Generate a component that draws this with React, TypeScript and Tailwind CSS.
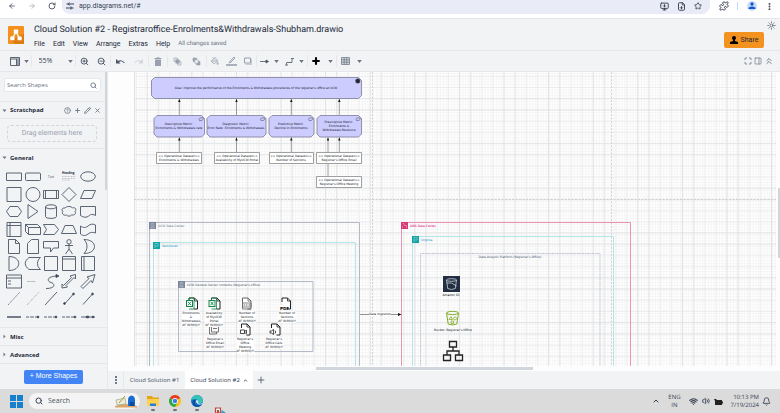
import React from "react";
import {
  ArrowLeft, ArrowRight, RotateCw, MonitorDown, FileDown, Star, Puzzle, ZoomIn, ZoomOut,
  PaintBucket, Plus, Maximize, PanelRight, ChevronsUp, Search, CircleHelp,
  Pencil, X, EllipsisVertical, ChevronUp, Wifi, Volume2, Bell, Sun,
} from "lucide-react";

const MENUS = ["File", "Edit", "View", "Arrange", "Extras", "Help"];

/* ---------- small shared pieces ---------- */

function Caret() {
  return (
    <svg viewBox="0 0 6 4" className="h-[3px] w-[5px] shrink-0 fill-gray-500">
      <path d="M0 0h6L3 4z" />
    </svg>
  );
}

function Tool({ label, children }: { label: string; children: React.ReactNode }) {
  return (
    <button type="button" aria-label={label} className="flex shrink-0 items-center justify-center">
      {children}
    </button>
  );
}

/* ---------- browser bar ---------- */

function BrowserBar() {
  return (
    <div className="flex h-[18px] shrink-0 items-start bg-white text-gray-600">
      <div className="flex h-3 w-[62px] items-center justify-around pl-[2px]">
        <Tool label="Back"><ArrowLeft size={8} strokeWidth={2.5} /></Tool>
        <Tool label="Forward"><ArrowRight size={8} className="text-gray-400" /></Tool>
        <Tool label="Reload"><RotateCw size={8} strokeWidth={2.8} /></Tool>
      </div>
      <div className="flex h-[14px] flex-1 items-center rounded-b-lg bg-[#e9ecf7] pb-[2px] pl-1">
        <Tool label="Site information">
          <svg viewBox="0 0 8 8" className="h-2 w-2 fill-none stroke-gray-700">
            <path d="M0.5 2H2M5 2h3M0 6h3M6 6h1.5" />
            <circle cx="3.3" cy="2" r="1" />
            <circle cx="4.8" cy="6" r="1" />
          </svg>
        </Tool>
        <input aria-label="Address" defaultValue="app.diagrams.net/#" className="ml-[5px] min-w-0 flex-1 bg-transparent font-[Roboto,sans-serif] text-[7px] leading-3 text-gray-700 outline-none" />
        <div className="flex items-center gap-2 pr-2 text-gray-700">
          <Tool label="Install app"><MonitorDown size={9} strokeWidth={2.5} /></Tool>
          <Tool label="Save page"><FileDown size={9} strokeWidth={2.5} /></Tool>
          <Tool label="Bookmark"><Star size={8} strokeWidth={2.5} /></Tool>
        </div>
      </div>
      <div className="flex h-3 w-[70px] items-center justify-between pl-[9px] pr-[6px] text-gray-700">
        <Tool label="Extensions"><Puzzle size={10} strokeWidth={2.4} /></Tool>
        <span className="h-2 w-px bg-blue-200" />
        <Tool label="Profile">
          <svg viewBox="0 0 10 10" className="h-[10px] w-[10px]">
            <circle cx="5" cy="5" r="5" fill="#c9dcfb" />
            <circle cx="5" cy="3" r="1.7" fill="#1358c8" />
            <path d="M1.5 8V6.8Q5 4.2 8.5 6.8V8z" fill="#1358c8" />
          </svg>
        </Tool>
        <Tool label="Browser menu"><EllipsisVertical size={9} strokeWidth={3} /></Tool>
      </div>
    </div>
  );
}

/* ---------- title, menus and toolbar ---------- */

function Header() {
  return (
    <header className="flex h-8 shrink-0 items-start border-t border-gray-200 pl-2 pr-1 font-[Roboto,sans-serif]">
      <svg viewBox="0 0 16 18" className="mt-[7px] h-[18px] w-4">
        <rect width="16" height="18" rx="1" fill="#f4911e" />
        <path d="M16 8v10H7l-4-4z" fill="#dd7c10" />
        <path d="M8 6L4.5 12M8 6l3.5 6" stroke="#fff" strokeWidth="1.3" />
        <path d="M5.8 3.5h4.4v4H5.8zM2.3 10.5h4.2v3.8H2.3zM9.5 10.5h4.2v3.8H9.5z" fill="#fff" />
      </svg>
      <div className="ml-[10px] flex-1 pt-[5px]">
        <h1 className="text-[9px] leading-3 text-gray-800">Cloud Solution #2 - Registraroffice-Enrolments&amp;Withdrawals-Shubham.drawio</h1>
        <nav className="mt-[3px] flex gap-2 text-[7px] leading-[10px] text-gray-800">
          {MENUS.map((m) => <button key={m} type="button">{m}</button>)}
          <span className="text-[6px] text-gray-500">All changes saved</span>
        </nav>
      </div>
      <div className="flex flex-col items-end pt-[2px]">
        <Tool label="Appearance"><Sun size={9} className="text-gray-600" /></Tool>
        <button type="button" className="mr-3 mt-[2px] flex h-4 w-10 items-center justify-center gap-[3px] rounded-[2px] bg-[#f4921f] text-[7px] text-gray-800">
          <svg viewBox="0 0 8 8" className="h-2 w-2 fill-black">
            <circle cx="4" cy="2" r="2" />
            <path d="M3 3h2v2l3 1v2H0V6l3-1z" />
          </svg>
          Share
        </button>
      </div>
    </header>
  );
}

function Stack({ front }: { front: boolean }) {
  return (
    <svg viewBox="0 0 9 9" className="h-[9px] w-[9px] fill-gray-300 stroke-gray-400">
      <path d="M1 1h3.5v3.5H1zM4.5 4.5H8V8H4.5z" strokeWidth="0.6" className={front ? "fill-gray-200" : "fill-gray-400"} />
      <path d="M2.8 2.8h3.4v3.4H2.8z" strokeWidth="0.6" className={front ? "fill-gray-400" : "fill-gray-100"} />
    </svg>
  );
}

function Toolbar() {
  const group = "flex h-3 shrink-0 items-center justify-around border-r border-gray-200";
  return (
    <div className="flex h-[22px] shrink-0 items-center border-b border-t border-gray-200 pl-2 pr-[6px] text-gray-500">
      <div className={`${group} w-6`}>
        <Tool label="View panels">
          <svg viewBox="0 0 10 9" className="h-[9px] w-[10px] fill-none stroke-gray-600">
            <path d="M.5.5h9v8h-9zM.5 2h9M6.500 2v6.500" strokeWidth="0.9" />
            <path d="M7 3h2v5H7z" className="fill-gray-400 stroke-none" />
          </svg>
        </Tool>
        <Caret />
      </div>
      <div className={`${group} w-11 pl-1`}>
        <select aria-label="Zoom level" defaultValue="55%" className="w-6 appearance-none bg-transparent text-[7px] text-gray-700 outline-none">
          <option>55%</option>
          <option>100%</option>
        </select>
        <Caret />
      </div>
      <div className={`${group} w-[35px] text-gray-600`}>
        <Tool label="Zoom in"><ZoomIn size={9} strokeWidth={2.5} /></Tool>
        <Tool label="Zoom out"><ZoomOut size={9} strokeWidth={2.5} /></Tool>
      </div>
      <div className={`${group} w-[38px]`}>
        <Tool label="Undo">
          <svg viewBox="0 0 9 7" className="h-[7px] w-[9px] fill-gray-600"><path d="M0 1v4.500h4.500L3 4q2.800-1.800 5 1.200l.8-.4Q6 .8 2 2.800z" /></svg>
        </Tool>
        <Tool label="Redo">
          <svg viewBox="0 0 9 7" className="h-[7px] w-[9px] fill-gray-300"><path d="M9 1v4.500H4.500L6 4Q3.200 2.200 1 5.200l-.8-.4Q3 .8 7 2.800z" /></svg>
        </Tool>
      </div>
      <div className={`${group} w-[19px]`}>
        <Tool label="Delete">
          <svg viewBox="0 0 8 9" className="h-[9px] w-2 fill-gray-400"><path d="M.5 1h2l.5-.8h2l.5.800h2v1h-7zM1 2.600h6V9H1z" /></svg>
        </Tool>
      </div>
      <div className={`${group} w-[39px]`}>
        <Tool label="To front"><Stack front /></Tool>
        <Tool label="To back"><Stack front={false} /></Tool>
      </div>
      <div className={`${group} w-[50px] text-gray-400`}>
        <Tool label="Fill colour"><PaintBucket size={8} strokeWidth={2.5} /></Tool>
        <Tool label="Line colour">
          <svg viewBox="0 0 11 10" className="h-[10px] w-[11px] fill-none stroke-gray-400">
            <path d="M3 6.5L8 1l1 1-5 5z" />
            <path d="M0 9h11" strokeWidth="1.6" />
          </svg>
        </Tool>
        <Tool label="Shadow">
          <svg viewBox="0 0 8 8" className="h-2 w-2 fill-none stroke-gray-400"><path d="M.5 1h6v5h-6z" /><path d="M1.500 7.300h6.200V2" strokeWidth="0.6" /></svg>
        </Tool>
      </div>
      <div className={`${group} w-[51px]`}>
        <Tool label="Connection">
          <svg viewBox="0 0 9 5" className="h-[5px] w-[9px] fill-gray-600 stroke-gray-600"><path d="M0 2.500h7M6 1l2.500 1.500L6 4z" strokeWidth="0.8" /></svg>
        </Tool>
        <Caret />
        <Tool label="Waypoints">
          <svg viewBox="0 0 9 9" className="h-[9px] w-[9px] fill-none stroke-gray-500"><path d="M1.500 8V5.500h5.500V1M0 8h3M6 1.500h3" strokeWidth="1" /></svg>
        </Tool>
        <Caret />
      </div>
      <div className={`${group} w-[29px]`}>
        <Tool label="Insert"><Plus size={10} strokeWidth={5} className="text-black" /></Tool>
        <Caret />
      </div>
      <div className="flex w-[28px] shrink-0 items-center justify-around">
        <Tool label="Table">
          <svg viewBox="0 0 9 8" className="h-2 w-[9px] fill-gray-300 stroke-gray-500"><path d="M.5.500h8v7h-8zM.5 2.800h8M.5 5.200h8M3.200.5v7M5.800.5v7" strokeWidth="0.7" /></svg>
        </Tool>
        <Caret />
      </div>
      <div className="flex flex-1 items-center justify-end gap-[2px]">
        <Tool label="Fullscreen"><Maximize size={8} strokeWidth={2.5} /></Tool>
        <Tool label="Format panel"><PanelRight size={8} strokeWidth={2} /></Tool>
        <Tool label="Collapse"><ChevronsUp size={10} strokeWidth={2.2} /></Tool>
      </div>
    </div>
  );
}

/* ---------- shape palette ---------- */

const S = (d: string, extra?: React.ReactNode) => <><path d={d} />{extra}</>;
const dot = (x: number, y: number) => <circle cx={x} cy={y} r="0.9" className="fill-gray-800" />;

const SHAPES: [string, React.ReactNode][] = [
  ["Rectangle", S("M1.500 5h15v7.500h-15z")],
  ["Rounded rectangle", <rect x="1.500" y="5" width="15" height="7.500" rx="1" />],
  ["Text", <text x="9" y="10" textAnchor="middle" className="fill-gray-700 stroke-none text-[3px]">Text</text>],
  ["Textbox", <><text x="2" y="6" className="fill-gray-800 stroke-none text-[3px] font-bold">Heading</text><path d="M2 8.500h13M2 10.500h13M2 12h8" strokeWidth="0.3" strokeDasharray="1 .5" /></>],
  ["Ellipse", <ellipse cx="9" cy="8.500" rx="7.300" ry="4.700" />],
  ["Square", S("M2 1.500h14v14H2z")],
  ["Circle", <circle cx="9" cy="8.500" r="7" />],
  ["Process", S("M1.500 4.500h15v8h-15zM3.500 4.500v8M14.500 4.500v8")],
  ["Diamond", S("M9 1.500l7 7-7 7-7-7z")],
  ["Parallelogram", S("M5 4.500h11.500l-3.500 8H1.500z")],
  ["Hexagon", S("M5 3.500h8l3.500 5-3.500 5H5l-3.500-5z")],
  ["Triangle", S("M4 1.500l10 7-10 7z")],
  ["Cylinder", S("M3.500 4v9.500c0 2.500 11 2.500 11 0V4", <ellipse cx="9" cy="3.800" rx="5.500" ry="2" />)],
  ["Cloud", S("M5 5C2 4.500 1 7.500 3 8.500c-2 2 1 4.500 3.500 3.500 1 1.500 4 1.500 5 0 3 .5 5-1.500 3.500-3.500C17 6 15 4 12.500 5 11.500 3 6.500 3 5 5z")],
  ["Document", S("M1.500 3.500h15v9c-4-2-5-1-7.500 1-3 1.500-5 .5-7.500-1z")],
  ["Internal storage", S("M2 1.500h14v14H2zM5 1.500v14M2 4.500h14")],
  ["Cube", S("M1.500 3.500h12l3 3v7h-12l-3-3zM1.500 3.500l3 3h12M4.500 6.500v7")],
  ["Step", S("M1.500 3.500h11l4 5-4 5h-11l3-5z")],
  ["Trapezoid", S("M5 4.500h8l3.500 8h-15z")],
  ["Tape", S("M1.500 5c3 2 5 2 7.500 0s4.500-2.500 7.500-1v8c-3-1-5-1-7.500 1s-5 2-7.500 0z")],
  ["Note", S("M3.500 1.500h7l4 4v10h-11zM10.500 1.500v4h4")],
  ["Card", S("M7.500 1.500h7v14h-11v-10z")],
  ["Callout", S("M1.500 3.500h15v6.500h-5l-3 4v-4h-7z")],
  ["Actor", S("M9 6v5M5 7.500h8M9 11l-3.500 5M9 11l3.500 5", <circle cx="9" cy="3.800" r="2.200" />)],
  ["Or", S("M5 1.500c14 0 14 14 0 14 4-4 4-10 0-14z")],
  ["And", S("M4 1.500c13 0 13 14 0 14z")],
  ["Data storage", S("M5 2.500h11.500c-4 3-4 9 0 12H5c-5-4-5-8 0-12z")],
  ["Container", S("M2.500 1.500h13v14h-13z")],
  ["Horizontal container", S("M2.500 1.500h13v14h-13zM2.500 4h13")],
  ["Vertical container", S("M2.500 1.500h13v14h-13zM5 1.500v14")],
  ["List", S("M1.500 2h15v13h-15zM1.500 5h15M3 8h3M3 11h3")],
  ["List item", <text x="7" y="9" textAnchor="middle" className="fill-gray-600 stroke-none text-[2px]">List Item</text>],
  ["Curve", S("M4 15.500c10 0 9-5 5-6s-5-6 6-6.500", <path d="M14 1.500l3 1.500-3 1.500z" className="fill-gray-800" />)],
  ["Bidirectional arrow", S("M2 15v-4l1.500 1.500 8-8L10 3l5.500-1.500V6L14 4.500l-8 8L7.500 14z")],
  ["Arrow", S("M2 13.500l8-8L8 4l8-2.500L13.500 10 12 7.500l-8 8z")],
  ["Dashed line", <path d="M3 15L15 2" strokeWidth="0.7" strokeDasharray="1.500 .6" />],
  ["Dotted line", <path d="M3 15L15 2" strokeWidth="0.6" strokeDasharray=".8 1" />],
  ["Line", S("M3 15L15 2")],
  ["Double arrow connector", S("M5 13.500l8-9", <>{dot(4.5, 13.5)}{dot(13.5, 4)}</>)],
  ["Directional connector", S("M4 14.500l9-10", dot(13.5, 4))],
  ["Link", <path d="M2 9h14" strokeWidth="1.500" />],
  ["Connector with label", S("M2 9h3M6 9h4M11 9h4", dot(14, 9))],
  ["Connector with two labels", S("M2 9h3M6 9h4M11 9h4", dot(14, 9))],
  ["Connector with three labels", S("M2 9h3M6 9h4M11 9h4", dot(15, 9))],
  ["Connector with symbol", S("M2 9h14", <>{dot(9, 9)}{dot(8, 9)}{dot(14, 9)}</>)],
];

function Section({ title, open = false }: { title: string; open?: boolean }) {
  return (
    <button type="button" aria-expanded={open} className="flex flex-1 items-center gap-[3px] pl-[2px] text-left text-[6px] font-bold leading-[18px] text-gray-800">
      <svg viewBox="0 0 5 5" className="h-[5px] w-[5px] fill-gray-500">
        <path d={open ? "M.5 1.500h4L2.500 4z" : "M1.500 .5v4L3.500 2.500z"} />
      </svg>
      {title}
    </button>
  );
}

function Sidebar() {
  return (
    <aside className="flex w-[108px] shrink-0 flex-col border-r border-gray-200">
      <div className="flex">
        <div className="min-w-0 flex-1">
          <div className="px-1 pb-[9px] pt-[6px]">
            <label className="flex h-[14px] items-center rounded-[2px] border border-gray-200 bg-white pl-[2px] pr-[3px]">
              <input aria-label="Search shapes" placeholder="Search Shapes" className="min-w-0 flex-1 bg-transparent text-[6px] outline-none placeholder:text-gray-500" />
              <Search size={7} strokeWidth={3} className="text-gray-500" />
            </label>
          </div>
          <div className="flex h-[18px] items-center border-y border-gray-200 text-gray-500">
            <Section title="Scratchpad" open />
            <div className="flex items-center gap-[3px] pr-1">
              <Tool label="Help"><CircleHelp size={7} strokeWidth={2.5} /></Tool>
              <Tool label="Add"><Plus size={7} strokeWidth={3} /></Tool>
              <Tool label="Edit"><Pencil size={7} strokeWidth={3} /></Tool>
              <Tool label="Close"><X size={7} strokeWidth={3} /></Tool>
            </div>
          </div>
          <div className="h-[29px] py-[6px] pl-[7px] pr-2">
            <div className="flex h-[17px] items-center justify-center rounded-[4px] border border-dashed border-gray-300 font-[Roboto,sans-serif] text-[7px] text-gray-400">Drag elements here</div>
          </div>
          <div className="flex h-[18px] items-center border-t border-gray-200"><Section title="General" open /></div>
        </div>
        <div className="w-[2px] bg-gray-300" />
      </div>
      <div className="flex">
        <div className="grid h-[161px] flex-1 grid-cols-5 grid-rows-9 pb-[2px] pl-[5px] pr-2 pt-[2px]">
          {SHAPES.map(([name, art]) => (
            <button key={name} type="button" aria-label={name} className="flex items-center justify-center">
              <svg viewBox="0 0 18 17" className="h-[17px] w-[18px] fill-none stroke-gray-600" strokeWidth="0.9">{art}</svg>
            </button>
          ))}
        </div>
        <div className="h-6 w-[2px] bg-gray-300" />
      </div>
      <div className="flex h-[18px] border-t border-gray-200"><Section title="Misc" /></div>
      <div className="flex h-[19px] border-y border-gray-200"><Section title="Advanced" /></div>
      <div className="flex flex-1 items-center justify-center">
        <button type="button" className="h-[14px] w-[59px] rounded-[2px] bg-[#4385f5] font-['Liberation_Sans',sans-serif] text-[7px] text-white">+ More Shapes</button>
      </div>
    </aside>
  );
}

/* ---------- diagram ---------- */

type LabelData = { x: number; y: number; text: string; tone?: string; left?: boolean; plate?: boolean };

const LABELS: LabelData[] = [
  { x: 122, y: 16, text: "Goal: Improve the performance of the Enrolments & Withdrawals procedures of the registrar's office at UCW" },
  { x: 45, y: 54, text: "Descriptive Metric:\nEnrolments & Withdrawals rate" },
  { x: 102, y: 54, text: "Diagnostic Metric:\nError Rate: Enrolments & Withdrawals" },
  { x: 157, y: 54, text: "Predictive Metric:\nDecline in Enrolments" },
  { x: 205, y: 54, text: "Prescriptive Metric:\nEnrolments &\nWithdrawals Resource" },
  { x: 45, y: 86, text: "<< Operational Dataset>>\nEnrolments & Withdrawals" },
  { x: 103, y: 86, text: "<< Operational Dataset>>\nAvailability of MyUCW Portal" },
  { x: 157, y: 86, text: "<< Operational Dataset>>\nNumber of Sections" },
  { x: 205, y: 86, text: "<< Operational Dataset>>\nRegistrar's Office Email" },
  { x: 205, y: 110, text: "<< Operational Dataset>>\nRegistrar's Office Meeting" },
  { x: 24, y: 154, text: "UCW Data Center", tone: "text-slate-500", left: true },
  { x: 28, y: 174, text: "Vancouver", tone: "text-cyan-600", left: true },
  { x: 53, y: 213, text: "UCW General Server contents (Registrar's office)", tone: "text-slate-600", left: true },
  { x: 276, y: 154, text: "AWS Data Center", tone: "text-pink-600", left: true },
  { x: 287, y: 168, text: "Virginia", tone: "text-cyan-600", left: true },
  { x: 376, y: 185, text: "Data Analytic Platform (Registrar's Office)", tone: "text-slate-600" },
  { x: 57, y: 247, text: "Enrolments\n&\nWithdrawals\nAF W/M/Q/Y", plate: true },
  { x: 80, y: 247, text: "Availability\nof MyUCW\nPortal\nAF W/M/Q/Y", plate: true },
  { x: 113, y: 245, text: "Number of\nSections\nAF W/M/Q/Y", plate: true },
  { x: 153, y: 245, text: "Number of\nSections\nAF W/M/Q/Y", plate: true },
  { x: 81, y: 271, text: "Registrar's\nOffice Email\nAF W/M/Q/Y", plate: true },
  { x: 111, y: 273, text: "Registrar's\nOffice\nMeeting\nAF W/M/Q/Y", plate: true },
  { x: 140, y: 271, text: "Registrar's\nOffice Calls\nAF W/M/Q/Y", plate: true },
  { x: 246, y: 242, text: "Data Ingestion", plate: true },
  { x: 317, y: 223, text: "Amazon S3", tone: "text-black" },
  { x: 319, y: 258, text: "Bucket: Registrar's Office" },
];

function Label({ x, y, text, tone = "text-gray-900", left, plate }: LabelData) {
  return (
    <div
      className={`absolute -translate-y-1/2 whitespace-pre text-[3px] leading-[4px] ${tone} ${left ? "text-left" : "-translate-x-1/2 text-center"} ${plate ? "bg-white" : ""}`}
      style={{ left: x, top: y }}
    >
      {text}
    </div>
  );
}

function Chamfer({ x, y, w, h }: { x: number; y: number; w: number; h: number }) {
  return <path d={`M${x + 3} ${y}H${x + w - 3}L${x + w} ${y + 3}V${y + h - 3}L${x + w - 3} ${y + h}H${x + 3}L${x} ${y + h - 3}V${y + 3}Z`} fill="#ccccff" stroke="#7c7c99" strokeWidth="0.8" />;
}

function UpArrow({ x, from, to }: { x: number; from: number; to: number }) {
  return (
    <g>
      <path d={`M${x} ${from}V${to}`} stroke="#666" strokeWidth="0.6" />
      <path d={`M${x - 1.2} ${to + 3}h2.400l-1.200-3z`} fill="#111" />
    </g>
  );
}

function Page({ x, y, color = "#222", children }: { x: number; y: number; color?: string; children?: React.ReactNode }) {
  return (
    <g transform={`translate(${x} ${y})`}>
      <path d="M0 4V0h5.500l3 3v8H5" fill="#fff" stroke={color} />
      <path d="M5.500 0v3h3" fill="none" stroke={color} strokeWidth="0.8" />
      {children}
    </g>
  );
}

function Excel({ x }: { x: number }) {
  return (
    <g>
      <Page x={x + 3} y={226} />
      <path d={`M${x + 3} 230v-4h5v11h-5`} fill="none" stroke="#15854b" strokeWidth="0.8" />
      <rect x={x + 0.5} y="228.500" width="6" height="6" fill="#fff" stroke="#15854b" />
      <path d={`M${x + 2} 229.700l3 3.600m0-3.600l-3 3.600`} stroke="#15854b" strokeWidth="0.9" />
    </g>
  );
}

function CornerIcon({ x, y, color, glyph }: { x: number; y: number; color: string; glyph: string }) {
  return (
    <g transform={`translate(${x} ${y})`}>
      <rect width="7" height="7" fill={color} />
      <path d={glyph} fill="none" stroke="#fff" strokeWidth="0.5" opacity="0.6" />
    </g>
  );
}

const BUILDING = "M2.200 6V1.500h2.600V6M3 3h1M3 4.500h1M1.500 6h4";
const FLAG = "M2 1.500V6M2 1.500h3.200v2.500H2";

function Diagram() {
  return (
    <div className="relative h-full overflow-hidden bg-white font-['DejaVu_Sans',sans-serif]">
      <svg className="h-full w-full" fill="none">
        <defs>
          <pattern id="minor" width="2.790" height="2.790" patternUnits="userSpaceOnUse" x="2" y="1">
            <path d="M0 .5h2.790M.5 0v2.790" stroke="#f4f4f5" strokeWidth="0.8" />
          </pattern>
          <pattern id="major" width="44.600" height="44.800" patternUnits="userSpaceOnUse" x="23.600" y="26">
            <path d="M12 0v44.800M23 0v44.800M0 23.200h44.600M0 34.400h44.600" stroke="#ededef" />
            <path d="M.8 0v44.800M34.200 0v44.800M0 .8h44.600M0 12h44.600" stroke="#e0e1e3" />
          </pattern>
        </defs>
        <rect width="100%" height="100%" fill="url(#minor)" />
        <rect width="100%" height="100%" fill="url(#major)" />
        <path d="M.5 0v400" stroke="#e2e3e6" />
        <path d="M238.500 0v400M477.500 0v400M0 127.500h2000" stroke="#ced0d2" strokeDasharray="2 1.500" />

        <Chamfer x={17.5} y={5.5} w={210} h={21} />
        <Chamfer x={20} y={43.5} w={50.5} h={21.5} />
        <Chamfer x={73} y={43.5} w={59} h={21.5} />
        <Chamfer x={135} y={43.5} w={45} h={21.5} />
        <Chamfer x={183} y={43.5} w={44.5} h={21.5} />
        <circle cx="223.800" cy="9" r="2.300" fill="#24243a" stroke="#555" strokeWidth="0.5" />
        {[67, 128.5, 176.5, 224].map((x) => (
          <path key={x} d={`M${x - 1.5} 48.500c-1-1 0-2.600 1.200-2.600H${x + 2}c1 1-.5 2.600-1.800 2.600z`} stroke="#555" strokeWidth="0.6" />
        ))}
        {[45.3, 102.5, 157.3, 205.3].map((x) => (
          <g key={x}>
            <UpArrow x={x} from={43} to={27} />
            <UpArrow x={x} from={80} to={65.5} />
          </g>
        ))}
        <UpArrow x={194} from={104} to={65.5} />
        <g fill="#fff" stroke="#888">
          <path d="M22.500 80.500h45v11h-45zM80.500 80.500h45v11h-45zM135.500 80.500h44v11h-44zM182.500 80.500h45v11h-45zM182.500 104.500h45v11h-45z" strokeWidth="0.8" />
        </g>

        <path d="M15.500 310V150.500h210V310" stroke="#b4b9c4" />
        <path d="M19.500 310V170.500h202V310" stroke="#b6e5e6" />
        <path d="M44.500 209.500h134.500v70H44.500z" stroke="#b3b9c7" />
        <path d="M267.500 310V150.500h229V310" stroke="#eb93b3" />
        <path d="M278.500 310V164.500h201V310" stroke="#b6e5e6" />
        <path d="M286.500 310V181.500h179.500V310" stroke="#c6cad8" strokeDasharray="2 .5" />
        <CornerIcon x={15} y={150} color="#7a879b" glyph={BUILDING} />
        <CornerIcon x={19} y={170} color="#12a5a8" glyph={FLAG} />
        <CornerIcon x={44} y={209} color="#7a879b" glyph={BUILDING} />
        <CornerIcon x={267} y={150} color="#d33a77" glyph="M1.500 1.500h1.500v2h2.500V6M1.500 6V4" />
        <CornerIcon x={278} y={164} color="#12a5a8" glyph={FLAG} />

        <Excel x={52} />
        <Excel x={74.5} />
        <Page x={108.5} y={226} color="#666">
          <path d="M0 3.500V11h8.500M0 5h8.500v4H0z" stroke="#666" strokeWidth="0.8" />
          <path d="M1.200 7h1.500M3.500 7H5M6 7h1.500" stroke="#666" />
        </Page>
        <Page x={148} y={226}>
          <rect x="-2" y="7" width="7" height="4.500" fill="#fff" />
          <text x="-2" y="11.500" className="fill-black text-[4px] font-bold">PDF</text>
        </Page>
        <path d="M77.500 252h7v8h-7zM77.500 254h-2v8h7v-2M79 254.500h4M79 256.500h4" stroke="#555" strokeWidth="0.8" />
        <Page x={107.5} y={252}><path d="M-1 6h4v3.500h-4zM3 7.500l2-1.300v3.500l-2-1.300" fill="#fff" stroke="#222" strokeWidth="0.8" /></Page>
        <Page x={137.5} y={252}><path d="M-1.500 7h1.500l2-1.500v5L0 9h-1.500zM3.500 6.500q1.500 1.500 0 3" fill="#fff" stroke="#222" strokeWidth="0.8" /></Page>

        <path d="M226 242.500h40" stroke="#666" strokeWidth="0.7" />
        <path d="M264 241l3.500 1.500-3.500 1.500z" fill="#111" />

        <g transform="translate(309 204)">
          <rect width="17" height="16" fill="#222f42" />
          <ellipse cx="8.500" cy="4" rx="5" ry="1.300" stroke="#e2e6ed" strokeWidth="0.7" />
          <path d="M3.500 4l1.200 8.500q3.800 2 7.600 0L13.500 4M8.500 7l5 3M4 7l4.500 0" stroke="#e2e6ed" strokeWidth="0.7" />
        </g>
        <g transform="translate(312 239)" stroke="#83ab28">
          <ellipse cx="6.500" cy="2" rx="6" ry="1.600" />
          <path d="M.5 2l1.700 11q4.300 2 8.600 0l1.700-11" />
          <circle cx="9" cy="7.500" r="1.500" strokeWidth="0.8" />
          <path d="M5 5.500L3 8.500h3.500zM5 10h2.500v2.500H5z" strokeWidth="0.8" />
        </g>
        <path d="M315.500 269.500h7v5.500h-7zM309.500 283h7v5.500h-7zM321.500 283h7v5.500h-7zM319 275v4M313 283v-4h12v4" stroke="#222" strokeWidth="1.300" />
      </svg>
      {LABELS.map((l, i) => <Label key={i} {...l} />)}
    </div>
  );
}

function Workspace() {
  return (
    <main className="flex min-w-0 flex-1 flex-col bg-[#fdfdfd]">
      <div className="flex min-h-0 flex-1 pl-[26px]">
        <div className="min-w-0 flex-1"><Diagram /></div>
        <div className="flex w-1 flex-col items-end">
          <div className="h-[116px]" />
          <div className="h-[70px] w-[2px] bg-gray-300" />
        </div>
      </div>
      <div className="flex h-[5px] items-center">
        <div className="ml-[208px] h-[3px] w-[217px] bg-gray-300" />
      </div>
      <div className="flex h-[18px] shrink-0 items-stretch bg-[#f1f3f5] text-[6px] text-gray-600">
        <button type="button" aria-label="Pages" className="flex w-4 items-center justify-center border-r border-gray-200"><EllipsisVertical size={10} strokeWidth={3} /></button>
        <button type="button" className="w-[61px]">Cloud Solution #1</button>
        <button type="button" className="flex w-[68px] items-center justify-center gap-[3px] bg-white text-gray-700">
          Cloud Solution #2 <ChevronUp size={5} strokeWidth={4} />
        </button>
        <button type="button" aria-label="Insert page" className="flex w-4 items-center justify-center"><Plus size={10} /></button>
      </div>
    </main>
  );
}

/* ---------- desktop task bar ---------- */

function AppButton({ label, children }: { label: string; children: React.ReactNode }) {
  return (
    <button type="button" aria-label={label} className="flex w-[22px] flex-col items-center gap-[2px] pt-[6px]">
      <svg viewBox="0 0 12 12" className="h-3 w-3">{children}</svg>
      <span className="h-[2px] w-1 rounded bg-gray-500" />
    </button>
  );
}

function Taskbar() {
  return (
    <footer className="flex h-6 shrink-0 items-center bg-[#dbdbdb] pl-[10px] pr-[9px] text-gray-700">
      <Tool label="Start">
        <svg viewBox="0 0 13 13" className="h-[13px] w-[13px] fill-[#1680cf]"><path d="M0 0h6v6H0zM7 0h6v6H7zM0 7h6v6H0zM7 7h6v6H7z" /></svg>
      </Tool>
      <label className="ml-[6px] flex h-4 w-[111px] items-center rounded-full bg-[#f4f4f4] pl-[6px]">
        <Search size={8} strokeWidth={3} />
        <input aria-label="Search" placeholder="Search" className="ml-[5px] w-[67px] bg-transparent text-[7px] outline-none placeholder:text-gray-600" />
        <svg viewBox="0 0 22 13" className="h-[13px] w-[22px]">
          <path d="M0 11q11-4 22 0v1.500H0z" fill="#e0a56a" />
          <path d="M1 5l9-2 1 6-9 1z" fill="#e9edda" stroke="#7da67a" strokeWidth="0.6" />
          <path d="M4 8l6-7" stroke="#c68d35" />
          <path d="M13 11V5q0-4 3.500-4.500Q20 1 20 5v6z" fill="#1b6cd0" />
          <path d="M15 7h4v4h-4z" fill="#0d4aa0" />
        </svg>
      </label>
      <div className="ml-[2px] flex h-full flex-1">
        <AppButton label="File Explorer">
          <path d="M0 1h5l1 1.500h6V11H0z" fill="#e8a317" />
          <path d="M0 4h12v7H0z" fill="#ffd24d" />
          <path d="M3 8.500h6V11H3z" fill="#2a7dd1" />
        </AppButton>
        <AppButton label="Chrome">
          <circle cx="6" cy="6" r="6" fill="#fbc116" />
          <path d="M6 6L.8 3A6 6 0 0 1 11.200 3z" fill="#e33b2e" />
          <path d="M6 6L.8 3A6 6 0 0 0 6 12l2.600-4.500z" fill="#2da94f" />
          <circle cx="6" cy="6" r="2.900" fill="#fff" />
          <circle cx="6" cy="6" r="2.200" fill="#3b7de8" />
        </AppButton>
        <AppButton label="Edge">
          <circle cx="6" cy="6" r="6" fill="#1177c9" />
          <path d="M.2 5C1-1.500 12-1.500 12 6c0 2.500-4 3-5 1.500 1-2.500-2-5-6.800-2.500z" fill="#36c3b4" />
          <path d="M4.500 5.500c-2 3 1 6.500 6.500 4C8 13.500 1 12 1.500 7 2 5 3.500 4.500 4.500 5.500z" fill="#0c4f9e" />
          <path d="M5 5.500c2-1 3 1 2 2 .5 1.500 3 1.500 4.500.5-2 3-7 1-6.500-2.500z" fill="#dcebf5" />
        </AppButton>
        <svg viewBox="0 0 12 6" className="ml-[6px] mt-[18px] h-[6px] w-3">
          <path d="M1.500 1h5v5h-5z" fill="#eee" stroke="#b94a3d" strokeWidth="1.200" />
          <path d="M3 3h2v3H3z" fill="#b94a3d" />
          <path d="M8 3l4 3H7z" fill="#3aa0cc" />
        </svg>
      </div>
      <div className="flex items-center text-[6px] leading-[8px]">
        <Tool label="Hidden icons"><ChevronUp size={8} strokeWidth={3} /></Tool>
        <div className="mx-2 text-center">ENG<br />IN</div>
        <div className="flex items-center gap-1">
          <Wifi size={9} strokeWidth={3} />
          <Volume2 size={8} strokeWidth={2.5} />
          <svg viewBox="0 0 9 7" className="h-[7px] w-[9px]"><path d="M0 1h2l1 1h5v5H1V3z" fill="#222" /><path d="M8 3.500h1v2H8z" fill="#222" /></svg>
        </div>
        <div className="ml-2 mr-[3px] text-right">10:13 PM<br />7/19/2024</div>
        <Tool label="Notifications"><Bell size={9} strokeWidth={2.3} /></Tool>
      </div>
    </footer>
  );
}

export default function App() {
  return (
    <div className="flex h-screen flex-col overflow-hidden bg-[#f1f3f5] font-['Open_Sans','Noto_Sans',sans-serif] [text-rendering:geometricPrecision]">
      <BrowserBar />
      <Header />
      <Toolbar />
      <div className="flex min-h-0 flex-1">
        <Sidebar />
        <Workspace />
      </div>
      <Taskbar />
    </div>
  );
}
